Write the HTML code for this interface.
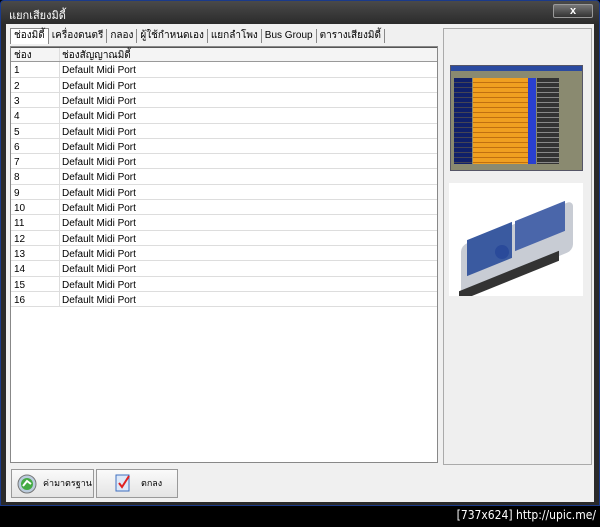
<!DOCTYPE html>
<html><head><meta charset="utf-8"><style>
*{margin:0;padding:0;box-sizing:border-box}
body{width:600px;height:527px;background:#000;position:relative;overflow:hidden;font-family:"Liberation Sans","Noto Sans CJK SC",sans-serif;font-size:10px;color:#000}
.win{position:absolute;left:0;top:0;width:600px;height:506px;background:linear-gradient(#4a4a4a,#2a2a2a 24px,#2a2a2a);border:1px solid #1a3a8a;border-radius:4px 4px 0 0}
.title{position:absolute;left:8px;top:5px;color:#fff;font-size:11px}
.close{position:absolute;left:552px;top:3px;width:40px;height:14px;background:linear-gradient(#777,#333);border:1px solid #999;border-radius:2px;color:#fff;font-weight:bold;font-size:11px;text-align:center;line-height:12px}
.body{position:absolute;left:6px;top:24px;width:588px;height:478px;background:#f0f0f0}
.tabs{position:absolute;left:10px;top:28px;height:16px;display:flex;white-space:nowrap}
.tab{padding:0 3px;border-right:1px solid #888;height:14px;line-height:14px;margin-top:1px}
.tab.a{border:1px solid #888;background:#fff;border-bottom:none;height:16px;margin-top:0}
.tbl{position:absolute;left:10px;top:46px;width:428px;height:417px;background:#fff;border:1px solid #888}
.row{position:absolute;left:0;width:426px;height:15.33px;border-bottom:1px solid #ddd;line-height:18px}
.row span{position:absolute;left:3px}.row b{font-weight:normal;position:absolute;left:51px}
.row:before{content:"";position:absolute;left:48px;top:0;bottom:0;border-left:1px solid #ddd}
.hdr{background:#f4f4f4;border-bottom:1px solid #999;border-top:1px solid #555;line-height:15px}
.rp{position:absolute;left:443px;top:28px;width:149px;height:437px;border:1px solid #aaa;background:#efefef}
.btn{position:absolute;top:469px;height:29px;border:1px solid #999;background:linear-gradient(#fafafa,#e4e4e4);font-size:9px;line-height:27px;white-space:nowrap}
.foot{position:absolute;right:4px;top:508px;color:#fff;font-family:"DejaVu Sans Condensed","Liberation Sans",sans-serif;font-size:12px}
</style></head><body>
<div class="win">
<div class="title">แยกเสียงมิดี้</div>
<div class="close">x</div>
</div>
<div class="body"></div>
<div class="tabs"><div class="tab a">ช่องมิดี้</div><div class="tab">เครื่องดนตรี</div><div class="tab">กลอง</div><div class="tab">ผู้ใช้กำหนดเอง</div><div class="tab">แยกลำโพง</div><div class="tab">Bus Group</div><div class="tab">ตารางเสียงมิดี้</div></div>
<div class="tbl">
<div class="row hdr" style="top:0"><span>ช่อง</span><b>ช่องสัญญาณมิดี้</b></div>
<div class="row" style="top:15.3px"><span>1</span><b>Default Midi Port</b></div>
<div class="row" style="top:30.6px"><span>2</span><b>Default Midi Port</b></div>
<div class="row" style="top:45.9px"><span>3</span><b>Default Midi Port</b></div>
<div class="row" style="top:61.2px"><span>4</span><b>Default Midi Port</b></div>
<div class="row" style="top:76.5px"><span>5</span><b>Default Midi Port</b></div>
<div class="row" style="top:91.8px"><span>6</span><b>Default Midi Port</b></div>
<div class="row" style="top:107.1px"><span>7</span><b>Default Midi Port</b></div>
<div class="row" style="top:122.4px"><span>8</span><b>Default Midi Port</b></div>
<div class="row" style="top:137.7px"><span>9</span><b>Default Midi Port</b></div>
<div class="row" style="top:153px"><span>10</span><b>Default Midi Port</b></div>
<div class="row" style="top:168.3px"><span>11</span><b>Default Midi Port</b></div>
<div class="row" style="top:183.6px"><span>12</span><b>Default Midi Port</b></div>
<div class="row" style="top:198.9px"><span>13</span><b>Default Midi Port</b></div>
<div class="row" style="top:214.2px"><span>14</span><b>Default Midi Port</b></div>
<div class="row" style="top:229.5px"><span>15</span><b>Default Midi Port</b></div>
<div class="row" style="top:244.8px"><span>16</span><b>Default Midi Port</b></div>
</div>
<div class="rp">
<div style="position:absolute;left:6px;top:36px;width:133px;height:106px;background:#8a8a70;border:1px solid #556">
<div style="height:5px;background:#2a4aa0"></div>
<div style="position:absolute;left:22px;top:12px;width:55px;height:86px;background:repeating-linear-gradient(#f0a020 0 4px,#c07010 4px 5px)"></div>
<div style="position:absolute;left:3px;top:12px;width:18px;height:86px;background:repeating-linear-gradient(#10206a 0 4px,#445 4px 5px)"></div>
<div style="position:absolute;left:77px;top:12px;width:8px;height:86px;background:#2a40d0"></div>
<div style="position:absolute;left:86px;top:12px;width:22px;height:86px;background:repeating-linear-gradient(#333 0 4px,#888 4px 5px)"></div>
</div>
<div style="position:absolute;left:5px;top:154px;width:134px;height:113px;background:#fff;overflow:hidden">
<div style="position:absolute;left:12px;top:40px;width:112px;height:50px;background:#c8ccd4;transform:skewY(-22deg);border-radius:6px"></div>
<div style="position:absolute;left:18px;top:48px;width:45px;height:36px;background:#3a5aa0;transform:skewY(-22deg)"></div>
<div style="position:absolute;left:66px;top:28px;width:50px;height:30px;background:#4a66aa;transform:skewY(-22deg)"></div>
<div style="position:absolute;left:46px;top:62px;width:14px;height:14px;background:#2a4a9a;border-radius:50%"></div>
<div style="position:absolute;left:10px;top:88px;width:100px;height:10px;background:#333;transform:skewY(-22deg)"></div>
</div>
</div>
<div class="btn" style="left:11px;width:83px"><svg width="20" height="20" style="position:absolute;left:5px;top:4px" viewBox="0 0 20 20"><circle cx="10" cy="10" r="9" fill="#bcd" stroke="#777"/><circle cx="10" cy="10" r="6" fill="#4a4"/><path d="M6 12l4-5 4 3" stroke="#fff" stroke-width="2" fill="none"/></svg><span style="position:absolute;left:31px">ค่ามาตรฐาน</span></div>
<div class="btn" style="left:96px;width:82px"><svg width="20" height="20" style="position:absolute;left:16px;top:3px" viewBox="0 0 20 20"><rect x="3" y="2" width="13" height="16" fill="#dde8f8" stroke="#4070c0"/><path d="M6 10l3 4 7-11" stroke="#e02020" stroke-width="2" fill="none"/></svg><span style="position:absolute;left:44px">ตกลง</span></div>
<div class="foot">[737x624] http://upic.me/</div>
</body></html>
